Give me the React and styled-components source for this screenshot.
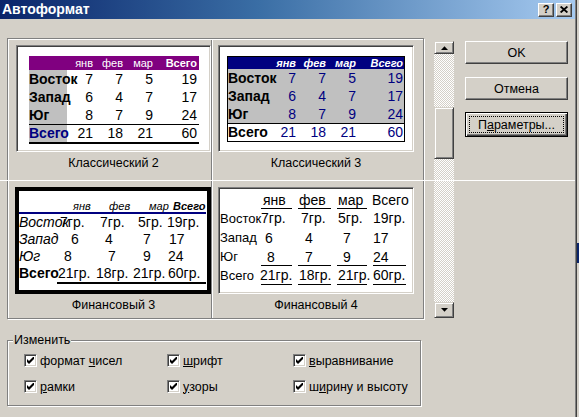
import React from 'react';
import styled, { createGlobalStyle, css } from 'styled-components';

const FONT = '"Liberation Sans", Arial, sans-serif';

const GlobalStyle = createGlobalStyle`
  html, body { margin: 0; padding: 0; background: #d4d0c8; }
  body { font-family: ${FONT}; font-size: 12.5px; color: #000; }
  #root { width: 579px; height: 417px; overflow: hidden; }
  * { box-sizing: border-box; }
`;

const Screen = styled.div`
  position: relative;
  display: flex;
  width: 579px;
  height: 417px;
  overflow: hidden;
  background: #d4d0c8;
`;

const Window = styled.div`
  width: 576px;
  height: 417px;
  display: flex;
  flex-direction: column;
  border-right: 1px solid #808080;
  background: #d4d0c8;
`;

const Backdrop = styled.div`
  flex: 1;
  display: flex;
  flex-direction: column;
  border-left: 1px solid #404040;
  background: #d4d0c8;
`;

const BackdropBlock = styled.div`
  margin-top: 243px;
  height: 20px;
  background: #0a246a;
`;

const SeamLine = styled.div`
  position: absolute;
  left: 0;
  top: 180px;
  width: 575px;
  height: 1px;
  background: #fff;
`;

const TitleBar = styled.div`
  height: 19px;
  flex-shrink: 0;
  display: flex;
  align-items: center;
  padding: 0 3px 0 2px;
  background: linear-gradient(to right, #0a246a 0%, #3a6ea5 45%, #a6caf0 100%);
`;

const Title = styled.div`
  color: #fff;
  font-family: ${FONT};
  font-weight: 700;
  font-size: 14px;
  line-height: 19px;
`;

const TitleButtons = styled.div`
  margin-left: auto;
  align-self: flex-start;
  margin-top: 3px;
  display: flex;
  gap: 2px;
`;

const CaptionButton = styled.div`
  width: 16px;
  height: 14px;
  background: #d4d0c8;
  border: 1px solid;
  border-color: #fff #404040 #404040 #fff;
  box-shadow: inset -1px -1px 0 #808080;
  display: flex;
  align-items: center;
  justify-content: center;
  font-family: ${FONT};
  font-weight: 700;
  font-size: 11px;
  line-height: 1;
  padding-bottom: 1px;
`;

const Body = styled.div`
  flex: 1;
  display: flex;
  flex-direction: column;
  padding: 19px 0 0 7px;
`;

const TopRow = styled.div`
  display: flex;
  align-items: flex-start;
`;

const ListBox = styled.div`
  width: 417px;
  height: 281px;
  border: 1px solid #808080;
  box-shadow: inset 1px 1px 0 #fff, 1px 1px 0 #fff;
  padding: 1px 0 0 1px;
  display: grid;
  grid-template-columns: 202px 212px;
  grid-template-rows: 140px 138px;
`;

const ListCell = styled.div`
  display: flex;
  flex-direction: column;
  align-items: flex-start;
  padding: ${p => p.$pt}px 0 0 ${p => p.$pl}px;
  ${p => p.$sep && css`
    border-left: 1px solid #808080;
    box-shadow: inset 1px 0 0 #fff;
  `}
`;

const Thumb = styled.div`
  width: ${p => p.$w}px;
  height: 107px;
  background: #fff;
  padding: ${p => p.$pad};
  overflow: hidden;
  ${p => p.$selected
    ? css`
      border: 4px solid #000;
      margin-left: -1px;
    `
    : css`
      border: 1px solid;
      border-color: #808080 #fff #fff #808080;
      box-shadow: inset 1px 1px 0 #404040, inset -1px -1px 0 #d4d0c8;
    `}
`;

const ThumbLabel = styled.div`
  width: ${p => p.$w}px;
  margin-top: 4px;
  text-align: center;
  font-size: 12.5px;
  line-height: 14px;
  white-space: nowrap;
`;

const Sheet = styled.div`
  display: flex;
  flex-direction: column;
  width: ${p => p.$w}px;
  font-family: ${FONT};
  border: ${p => (p.$outline ? '1px solid #000' : 'none')};
`;

const SheetRow = styled.div`
  display: grid;
  grid-template-columns: ${p => p.$cols};
  height: ${p => p.$h}px;
  background: ${p => p.$bg || 'transparent'};
  border-top: ${p => p.$bt || 'none'};
  border-bottom: ${p => p.$bb || 'none'};
`;

const SheetRule = styled.div`
  height: ${p => p.$h}px;
  background: ${p => p.$c};
  margin-left: ${p => p.$ml || 0}px;
`;

const SCell = styled.div`
  position: relative;
  min-width: 0;
  display: flex;
  align-items: ${p => p.$v || 'center'};
  justify-content: ${p => (p.$a === 'r' ? 'flex-end' : 'flex-start')};
  padding: 0 ${p => p.$pr || 0}px 0 ${p => p.$pl || 0}px;
  background: ${p => p.$bg || 'transparent'};
  color: ${p => p.$c || '#000'};
  font-size: ${p => p.$s || 14}px;
  line-height: ${p => (p.$s || 14) + 1}px;
  font-weight: ${p => (p.$b ? 700 : 400)};
  font-style: ${p => (p.$i ? 'italic' : 'normal')};
  white-space: nowrap;
  ${p => p.$ul && css`
    &::after {
      content: '';
      position: absolute;
      left: 2px;
      right: 4px;
      bottom: 0;
      height: 1px;
      background: #000;
    }
  `}
`;

const ScrollBar = styled.div`
  margin: 3px 0 0 10px;
  width: 20px;
  height: 277px;
  display: flex;
  flex-direction: column;
`;

const ScrollButton = styled.div`
  height: ${p => p.$h}px;
  flex-shrink: 0;
  background: #d4d0c8;
  border: 1px solid;
  border-color: #d4d0c8 #404040 #404040 #d4d0c8;
  box-shadow: inset 1px 1px 0 #fff, inset -1px -1px 0 #808080;
  display: flex;
  align-items: center;
  justify-content: center;
`;

const Track = styled.div`
  height: ${p => p.$h}px;
  flex-shrink: 0;
  background: repeating-conic-gradient(#fff 0 25%, #d4d0c8 0 50%) 0 0 / 2px 2px;
`;

const ButtonColumn = styled.div`
  margin: 3px 0 0 11px;
  display: flex;
  flex-direction: column;
`;

const DialogButton = styled.div`
  width: 103px;
  height: ${p => (p.$default ? 25 : 23)}px;
  margin-top: ${p => p.$mt || 0}px;
  background: #d4d0c8;
  font-size: 12.5px;
  display: flex;
  align-items: center;
  justify-content: center;
  ${p => p.$default
    ? css`
      border: 1px solid #000;
      box-shadow: inset 1px 1px 0 #fff, inset -1px -1px 0 #404040, inset -2px -2px 0 #808080;
      padding: 3px;
    `
    : css`
      border: 1px solid;
      border-color: #fff #404040 #404040 #fff;
      box-shadow: inset -1px -1px 0 #808080;
    `}
`;

const FocusRect = styled.div`
  flex: 1;
  align-self: stretch;
  border: 1px dotted #000;
  display: flex;
  align-items: center;
  justify-content: center;
`;

const Acc = styled.span`
  text-decoration: underline;
  text-underline-offset: 1px;
`;

const GroupBox = styled.div`
  margin-top: 21px;
  width: 414px;
  height: 66px;
  border: 1px solid #808080;
  box-shadow: inset 1px 1px 0 #fff, 1px 1px 0 #fff;
  display: flex;
  flex-direction: column;
`;

const Legend = styled.div`
  align-self: flex-start;
  margin: -8px 0 0 5px;
  padding: 0 1px;
  background: #d4d0c8;
  line-height: 14px;
  font-size: 12.5px;
`;

const CheckGrid = styled.div`
  display: grid;
  grid-template-columns: 143px 126px 1fr;
  row-gap: 13px;
  margin: 7px 0 0 16px;
`;

const CheckItem = styled.div`
  display: flex;
  align-items: center;
  height: 13px;
  font-size: 12.5px;
  white-space: nowrap;
`;

const CheckBox = styled.div`
  width: 13px;
  height: 13px;
  flex-shrink: 0;
  background: #fff;
  border: 1px solid;
  border-color: #808080 #fff #fff #808080;
  box-shadow: inset 1px 1px 0 #404040, inset -1px -1px 0 #d4d0c8;
  display: flex;
  align-items: center;
  justify-content: center;
`;

const CheckText = styled.span`
  margin-left: 3px;
  line-height: 14px;
`;

/* ---------- mini sheet rendering ---------- */

function Row({ cols, h, bg, bt, bb, v, cells }) {
  return (
    <SheetRow $cols={cols} $h={h} $bg={bg} $bt={bt} $bb={bb}>
      {cells.map((c, i) => (
        <SCell
          key={i}
          $b={c.b}
          $i={c.i}
          $s={c.s}
          $c={c.c}
          $a={c.a}
          $pl={c.pl}
          $pr={c.pr}
          $bg={c.bg}
          $ul={c.ul}
          $v={v}
        >
          {c.t}
        </SCell>
      ))}
    </SheetRow>
  );
}

const GREY = '#c0c0c0';
const NAVY = '#000080';

const C2 = '38px 28px 30px 30px 44px';
const hdr2 = (t, b) => ({ t, a: 'r', pr: 2, s: 11, c: '#fff', b });
const n = (t, extra = {}) => ({ t, a: 'r', pr: 2, ...extra });

function Classic2() {
  return (
    <Sheet $w={170}>
      <Row cols={C2} h={14} bg="#800080" cells={[{ t: '' }, hdr2('янв'), hdr2('фев'), hdr2('мар'), hdr2('Всего', 1)]} />
      {[
        ['Восток', '7', '7', '5', '19'],
        ['Запад', '6', '4', '7', '17'],
        ['Юг', '8', '7', '9', '24'],
      ].map(r => (
        <Row key={r[0]} cols={C2} h={18} cells={[{ t: r[0], b: 1, bg: GREY }, n(r[1]), n(r[2]), n(r[3]), n(r[4])]} />
      ))}
      <Row
        cols={C2}
        h={20}
        bt="1px solid #000"
        bb="2px solid #000"
        cells={[{ t: 'Всего', b: 1, c: NAVY, bg: GREY }, n('21'), n('18'), n('21'), n('60')]}
      />
    </Sheet>
  );
}

const C3 = '40px 30px 30px 30px 46px';
const hdr3 = t => ({ t, a: 'r', pr: 2, s: 11, c: '#fff', b: 1, i: 1 });
const nv = (t, pr = 2) => ({ t, a: 'r', pr, c: NAVY });

function Classic3() {
  return (
    <Sheet $w={178} $outline>
      <Row cols={C3} h={12} bg={NAVY} cells={[{ t: '' }, hdr3('янв'), hdr3('фев'), hdr3('мар'), { ...hdr3('Всего'), pr: 1 }]} />
      {[
        ['Восток', '7', '7', '5', '19'],
        ['Запад', '6', '4', '7', '17'],
        ['Юг', '8', '7', '9', '24'],
      ].map(r => (
        <Row key={r[0]} cols={C3} h={18} bg={GREY} cells={[{ t: r[0], b: 1 }, nv(r[1]), nv(r[2]), nv(r[3]), nv(r[4], 1)]} />
      ))}
      <Row
        cols={C3}
        h={18}
        bg="#fff"
        bt="1px solid #000"
        cells={[{ t: 'Всего', b: 1 }, nv('21'), nv('18'), nv('21'), nv('60', 1)]}
      />
    </Sheet>
  );
}

const F3 = '39px 38px 37px 34px 39px';
const v = (t, pl) => ({ t, pl });

function Finance3() {
  return (
    <Sheet $w={187}>
      <Row
        cols={F3}
        h={21}
        v="flex-end"
        cells={[
          { t: '' },
          { t: 'янв', i: 1, s: 11, pl: 15 },
          { t: 'фев', i: 1, s: 11, pl: 13 },
          { t: 'мар', i: 1, s: 11, pl: 16 },
          { t: 'Всего', i: 1, b: 1, s: 11, pl: 6 },
        ]}
      />
      <SheetRule $h={2} $c={NAVY} />
      <Row cols={F3} h={17} cells={[{ t: 'Восток', i: 1 }, v('7гр.', 2), v('7гр.', 4), v('5гр.', 5), v('19гр.', 0)]} />
      <Row cols={F3} h={17} cells={[{ t: 'Запад', i: 1 }, v('6', 13), v('4', 9), v('7', 10), v('17', 2)]} />
      <Row cols={F3} h={17} cells={[{ t: 'Юг', i: 1 }, v('8', 6), v('7', 12), v('9', 10), v('24', 1)]} />
      <Row cols={F3} h={17} cells={[{ t: 'Всего', b: 1 }, v('21гр.', 0), v('18гр.', 0), v('21гр.', 0), v('60гр.', 1)]} />
      <SheetRule $h={2} $c="#000" $ml={38} />
    </Sheet>
  );
}

const F4 = '39px 37px 39px 36px 39px';
const u = (t, pl) => ({ t, pl, ul: 1 });
const lbl = t => ({ t, s: 13 });

function Finance4() {
  return (
    <Sheet $w={190}>
      <Row cols={F4} h={17} cells={[{ t: '' }, u('янв', 4), u('фев', 3), u('мар', 3), v('Всего', 1)]} />
      <Row cols={F4} h={19} cells={[lbl('Восток'), v('7гр.', 2), v('7гр.', 5), v('5гр.', 3), v('19гр.', 2)]} />
      <Row cols={F4} h={20} cells={[lbl('Запад'), v('6', 6), v('4', 9), v('7', 8), v('17', 2)]} />
      <Row cols={F4} h={18} cells={[lbl('Юг'), u('8', 8), u('7', 9), u('9', 8), u('24', 2)]} />
      <Row cols={F4} h={19} cells={[lbl('Всего'), u('21гр.', 1), u('18гр.', 3), u('21гр.', 3), u('60гр.', 2)]} />
    </Sheet>
  );
}

/* ---------- icons ---------- */

const CloseGlyph = () => (
  <svg width="8" height="7" viewBox="0 0 8 7">
    <path d="M0.6 0.5 L7.4 6.5 M7.4 0.5 L0.6 6.5" stroke="#000" strokeWidth="1.8" fill="none" />
  </svg>
);

const ArrowUp = () => (
  <svg width="7" height="4" viewBox="0 0 7 4">
    <polygon points="0,4 3.5,0.3 7,4" fill="#000" />
  </svg>
);

const ArrowDown = () => (
  <svg width="7" height="4" viewBox="0 0 7 4">
    <polygon points="0,0 7,0 3.5,3.7" fill="#000" />
  </svg>
);

const CheckMark = () => (
  <svg width="7" height="7" viewBox="0 0 7 7">
    <path d="M0 2 L2 4 L7 -1 L7 2 L2 7 L0 5 Z" fill="#000" />
  </svg>
);

const checks = [
  <>формат <Acc>ч</Acc>исел</>,
  <><Acc>ш</Acc>рифт</>,
  <><Acc>в</Acc>ыравнивание</>,
  <><Acc>р</Acc>амки</>,
  <><Acc>у</Acc>зоры</>,
  <>ш<Acc>и</Acc>рину и высоту</>,
];

export default function App() {
  return (
    <>
      <GlobalStyle />
      <Screen>
        <Window>
          <TitleBar>
            <Title>Автоформат</Title>
            <TitleButtons>
              <CaptionButton>?</CaptionButton>
              <CaptionButton>
                <CloseGlyph />
              </CaptionButton>
            </TitleButtons>
          </TitleBar>
          <Body>
            <TopRow>
              <ListBox>
                <ListCell $pt={5} $pl={7}>
                  <Thumb $w={195} $pad="10px 0 0 12px">
                    <Classic2 />
                  </Thumb>
                  <ThumbLabel $w={195}>Классический 2</ThumbLabel>
                </ListCell>
                <ListCell $pt={5} $pl={6} $sep>
                  <Thumb $w={196} $pad="10px 0 0 8px">
                    <Classic3 />
                  </Thumb>
                  <ThumbLabel $w={196}>Классический 3</ThumbLabel>
                </ListCell>
                <ListCell $pt={7} $pl={7}>
                  <Thumb $w={196} $pad="0" $selected>
                    <Finance3 />
                  </Thumb>
                  <ThumbLabel $w={195}>Финансовый 3</ThumbLabel>
                </ListCell>
                <ListCell $pt={7} $pl={6} $sep>
                  <Thumb $w={196} $pad="4px 0 0 1px">
                    <Finance4 />
                  </Thumb>
                  <ThumbLabel $w={196}>Финансовый 4</ThumbLabel>
                </ListCell>
              </ListBox>
              <ScrollBar>
                <ScrollButton $h={13}>
                  <ArrowUp />
                </ScrollButton>
                <Track $h={53} />
                <ScrollButton $h={52} />
                <Track $h={143} />
                <ScrollButton $h={16}>
                  <ArrowDown />
                </ScrollButton>
              </ScrollBar>
              <ButtonColumn>
                <DialogButton>OK</DialogButton>
                <DialogButton $mt={13}>Отмена</DialogButton>
                <DialogButton $mt={12} $default>
                  <FocusRect>
                    <span>
                      П<Acc>а</Acc>раметры...
                    </span>
                  </FocusRect>
                </DialogButton>
              </ButtonColumn>
            </TopRow>
            <GroupBox>
              <Legend>Изменить</Legend>
              <CheckGrid>
                {checks.map((c, i) => (
                  <CheckItem key={i}>
                    <CheckBox>
                      <CheckMark />
                    </CheckBox>
                    <CheckText>{c}</CheckText>
                  </CheckItem>
                ))}
              </CheckGrid>
            </GroupBox>
          </Body>
        </Window>
        <Backdrop>
          <BackdropBlock />
        </Backdrop>
        <SeamLine />
      </Screen>
    </>
  );
}
